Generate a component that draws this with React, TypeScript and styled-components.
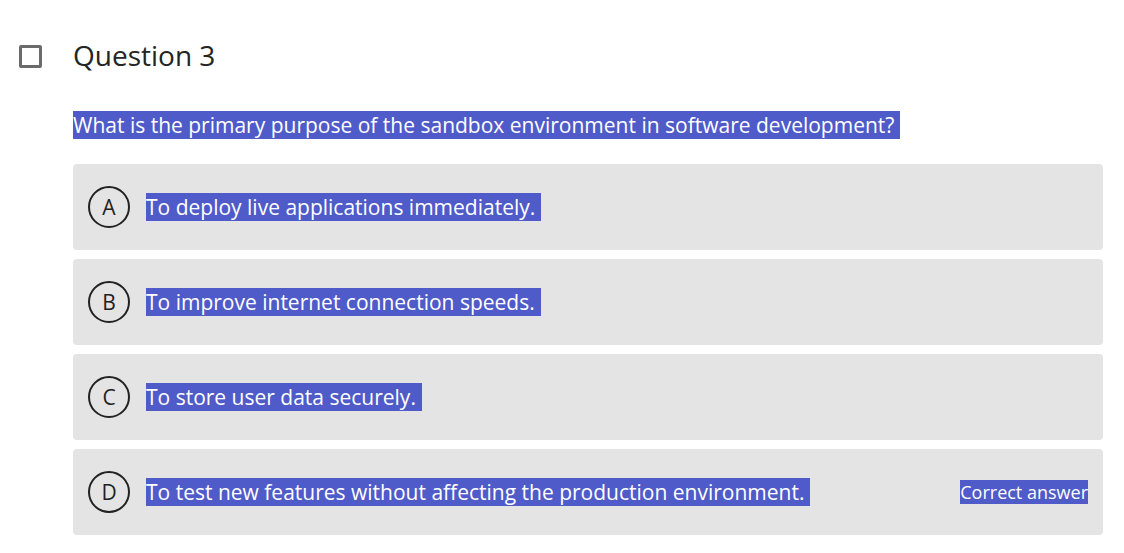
import styled, { createGlobalStyle } from "styled-components";

const Global = createGlobalStyle`
  body {
    margin: 0;
    background: #ffffff;
    font-family: "Open Sans", "Noto Sans", sans-serif;
    color: #242424;
  }
`;

const Page = styled.div`
  padding: 38px 21px 17px 19px;
  display: flex;
  gap: 31px;
  align-items: flex-start;
`;

const Check = styled.div`
  width: 17px;
  height: 17px;
  margin-top: 7px;
  border: 3.5px solid #6b6b6b;
  border-radius: 2px;
  flex-shrink: 0;
`;

const Body = styled.div`
  flex: 1;
  display: flex;
  flex-direction: column;
`;

const Title = styled.h2`
  margin: 0;
  font-size: 28px;
  font-weight: 500;
  line-height: 34px;
  color: #242424;
`;

const Mark = styled.span<{ $pad?: boolean }>`
  background: #4f5bc9;
  color: #ffffff;
  padding-right: ${(p) => (p.$pad ? "6px" : "0")};
`;

const Prompt = styled.div`
  margin-top: 40px;
  font-size: 21px;
  line-height: 26px;
`;

const Options = styled.div`
  margin-top: 26px;
  display: flex;
  flex-direction: column;
  gap: 9px;
`;

const Option = styled.div`
  height: 86px;
  box-sizing: border-box;
  background: #e4e4e4;
  border-radius: 4px;
  padding: 0 15px 0 15px;
  display: flex;
  align-items: center;
`;

const Letter = styled.div`
  width: 42px;
  height: 42px;
  box-sizing: border-box;
  border: 2.5px solid #222;
  border-radius: 50%;
  display: flex;
  align-items: center;
  justify-content: center;
  font-size: 21px;
  color: #222;
  flex-shrink: 0;
`;

const Answer = styled.div`
  margin-left: 16px;
  flex: 1;
  font-size: 21px;
  line-height: 32px;
`;

const Correct = styled.div`
  font-size: 18px;
  line-height: 26px;
`;

const options = [
  { letter: "A", text: "To deploy live applications immediately." },
  { letter: "B", text: "To improve internet connection speeds." },
  { letter: "C", text: "To store user data securely." },
  {
    letter: "D",
    text: "To test new features without affecting the production environment.",
    correct: true,
  },
];

function App() {
  return (
    <Page>
      <Global />
      <Check />
      <Body>
        <Title>Question 3</Title>
        <Prompt>
          <Mark $pad>What is the primary purpose of the sandbox environment in software development?</Mark>
        </Prompt>
        <Options>
          {options.map((o) => (
            <Option key={o.letter}>
              <Letter>{o.letter}</Letter>
              <Answer>
                <Mark $pad>{o.text}</Mark>
              </Answer>
              {o.correct && (
                <Correct>
                  <Mark>Correct answer</Mark>
                </Correct>
              )}
            </Option>
          ))}
        </Options>
      </Body>
    </Page>
  );
}

export default App;
